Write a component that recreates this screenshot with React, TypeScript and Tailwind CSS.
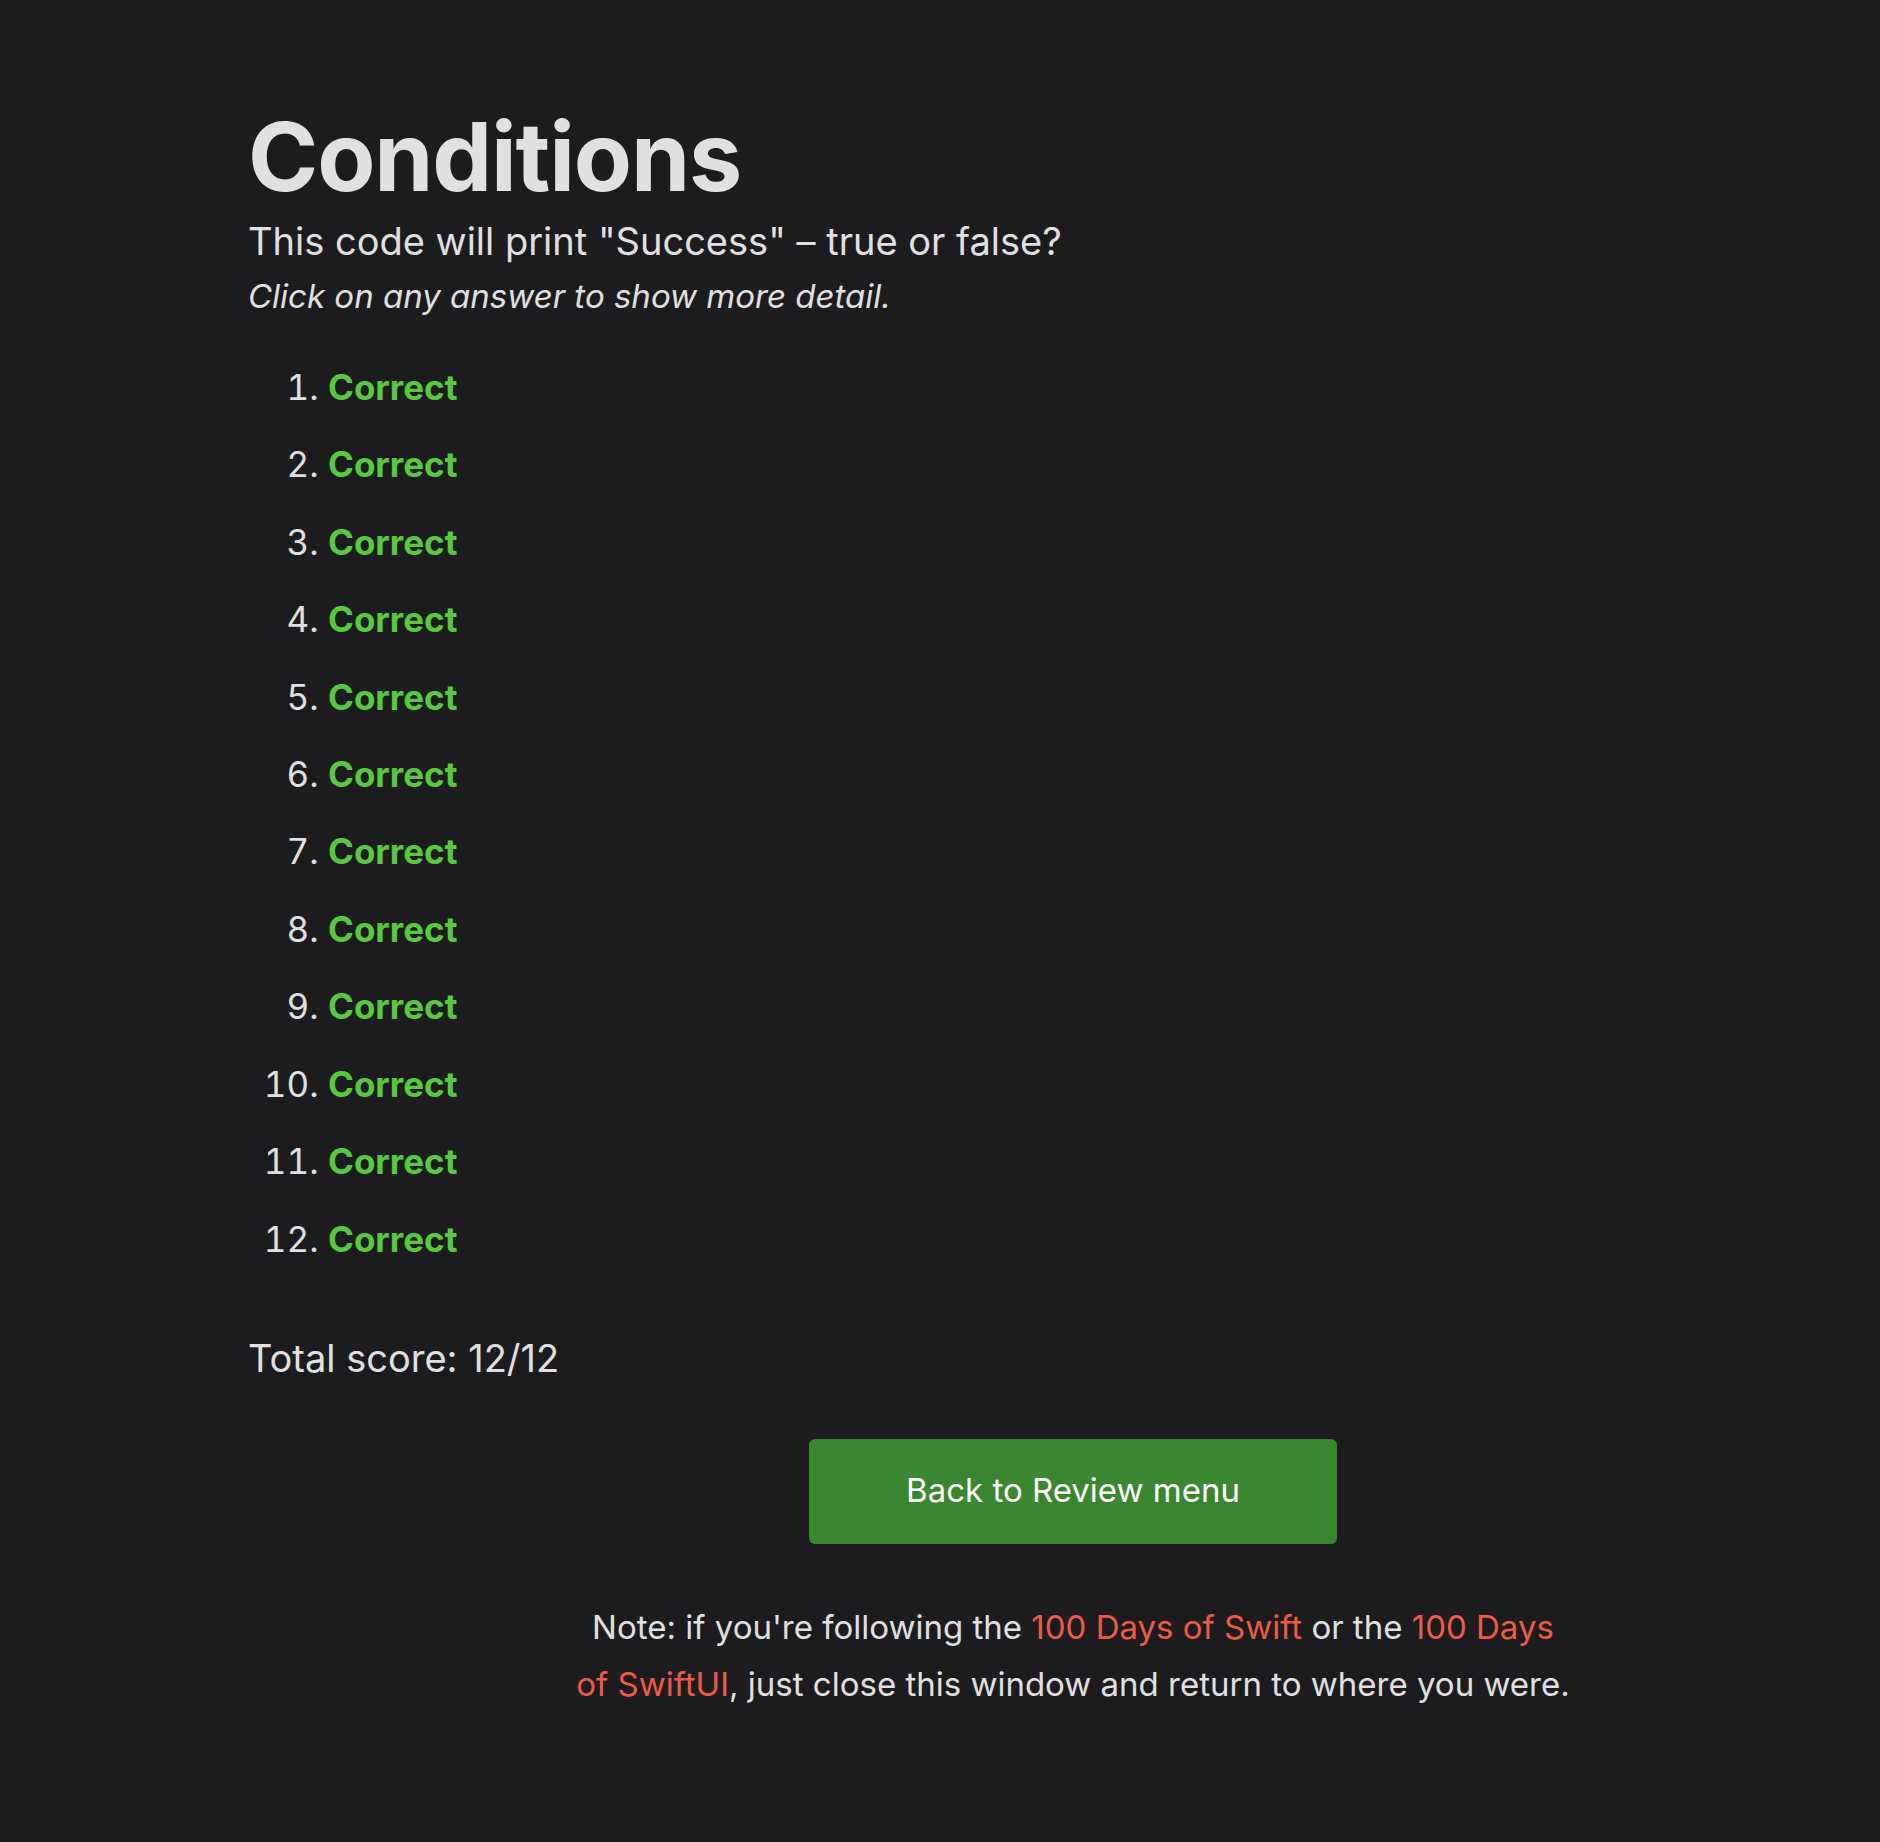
export default function App() {
  const answers = Array.from({ length: 12 }, (_, i) => i + 1);

  return (
    <div
      className="min-h-screen bg-[#1c1c1e] text-[#e0e0e0] pb-[110px]"
      style={{ fontFamily: 'Inter, "Noto Sans", sans-serif' }}
    >
      <div className="pl-[248px] pt-[105px]">
        <h1 className="text-[95px] font-bold leading-[1.1] tracking-[-0.012em]">Conditions</h1>
        <p className="mt-[9px] text-[38px] leading-[1.2]">
          This code will print "Success" – true or false?
        </p>
        <p className="mt-[13px] text-[33px] leading-[1.2] italic">
          Click on any answer to show more detail.
        </p>

        <ol className="mt-[32px] list-decimal pl-[80px] text-[35px]">
          {answers.map((n) => (
            <li key={n} className="leading-[77.45px] marker:text-[#e0e0e0]">
              <span className="font-bold text-[#58c83c] cursor-pointer">Correct</span>
            </li>
          ))}
        </ol>

        <p className="mt-[58px] text-[38px] leading-[1.2]">Total score: 12/12</p>
      </div>

      <div className="pl-[266px] flex flex-col items-center">
        <button className="mt-[57px] w-[528px] h-[105px] rounded-[6px] bg-[#3b8630] text-white text-[33px]">
          Back to Review menu
        </button>
        <p className="mt-[55px] text-center text-[33px] leading-[57.5px]">
          Note: if you're following the{' '}
          <a className="text-[#ec5a48] cursor-pointer">100 Days of Swift</a> or the{' '}
          <a className="text-[#ec5a48] cursor-pointer">100 Days</a>
          <br />
          <a className="text-[#ec5a48] cursor-pointer">of SwiftUI</a>, just close this window and
          return to where you were.
        </p>
      </div>
    </div>
  );
}
